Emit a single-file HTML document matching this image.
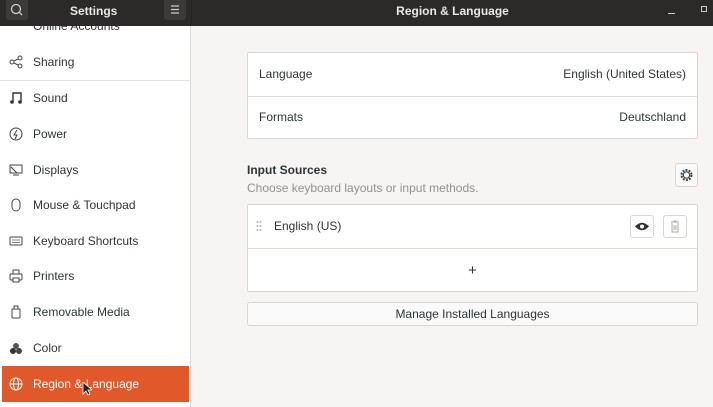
<!DOCTYPE html>
<html><head><meta charset="utf-8"><style>
*{margin:0;padding:0;box-sizing:border-box}
body{width:713px;height:407px;overflow:hidden;background:#f6f5f4;font-family:"Liberation Sans","DejaVu Sans",sans-serif;font-size:12px;color:#2e3436;position:relative}
.hdr{position:absolute;left:0;top:0;width:713px;height:26px;background:#2c2a29;color:#eee}
.hb{position:absolute;top:0;height:20px;width:22px;background:#3c3a39;border-radius:0 0 3px 3px}
.side{position:absolute;left:0;top:26px;width:191px;height:381px;background:#fff;border-right:1px solid #dcdad7;overflow:hidden}
.it{position:absolute;left:0;width:191px;height:36px;line-height:36px;padding-left:33px;font-size:12px;color:#2e3436}
.it svg{position:absolute;left:9px;top:11px}
.sel{background:#e1582a;color:#fff;left:2px;width:187px}
.box{position:absolute;left:247px;width:451px;background:#fff;border:1px solid #dad8d5;border-radius:2px}
.row{position:absolute;left:0;width:449px;height:43px;line-height:43px;padding:0 11px}
.btn{position:absolute;background:#fafafa;border:1px solid #d8d6d3;border-radius:3px}
</style></head><body>
<div class="hdr">
 <div class="hb" style="left:6px"><svg width="22" height="20"><circle cx="10" cy="9" r="4.5" fill="none" stroke="#ccc" stroke-width="1.3"/><line x1="13.3" y1="12.3" x2="16" y2="15" stroke="#ccc" stroke-width="1.3"/></svg></div>
 <div style="position:absolute;left:70px;top:4px;font-weight:bold;font-size:12px;color:#e8e8e8">Settings</div>
 <div class="hb" style="left:164px"><svg width="22" height="20"><path d="M7 6h8M7 9.5h8M7 13h8" stroke="#ccc" stroke-width="1.2"/></svg></div>
 <div style="position:absolute;left:191px;top:0;width:1px;height:26px;background:#222"></div>
 <div style="position:absolute;left:192px;width:521px;top:4px;text-align:center;font-weight:bold;color:#e8e8e8">Region &amp; Language</div>
 <div style="position:absolute;left:668px;top:13px;width:7px;height:1px;background:#ccc"></div>
 <div style="position:absolute;left:701px;top:6px;width:6px;height:6px;border:1px solid #ccc"></div>
</div>
<div class="side">
 <div class="it" style="top:-18px">Online Accounts</div>
 <div class="it" style="top:18px"><svg width="14" height="14"><circle cx="3" cy="7" r="2" fill="none" stroke="#444"/><circle cx="11" cy="3" r="2" fill="none" stroke="#444"/><circle cx="11" cy="11" r="2" fill="none" stroke="#444"/><path d="M5 6l4-2M5 8l4 2" stroke="#444"/></svg>Sharing</div>
 <div style="position:absolute;left:0;top:54px;width:191px;height:1px;background:#e6e4e1"></div>
 <div class="it" style="top:54px"><svg width="14" height="14"><path d="M4 11V2h8v9" fill="none" stroke="#333" stroke-width="1.4"/><circle cx="3" cy="11" r="1.8" fill="#333"/><circle cx="11" cy="11" r="1.8" fill="#333"/></svg>Sound</div>
 <div class="it" style="top:90px"><svg width="14" height="14"><circle cx="7" cy="7" r="6" fill="none" stroke="#444"/><path d="M8 3L5 8h3l-2 4" fill="none" stroke="#444"/></svg>Power</div>
 <div class="it" style="top:126px"><svg width="14" height="14"><rect x="1" y="2" width="12" height="8" fill="none" stroke="#444"/><path d="M4 12h6M2 4l6 6" stroke="#444"/></svg>Displays</div>
 <div class="it" style="top:161px"><svg width="14" height="14"><rect x="3" y="1" width="8" height="12" rx="4" fill="none" stroke="#444"/></svg>Mouse &amp; Touchpad</div>
 <div class="it" style="top:197px"><svg width="14" height="14"><rect x="1" y="3" width="12" height="8" rx="1" fill="none" stroke="#444"/><path d="M3 6h8M3 8.5h8" stroke="#888"/></svg>Keyboard Shortcuts</div>
 <div class="it" style="top:232px"><svg width="14" height="14"><rect x="4" y="1" width="6" height="4" fill="none" stroke="#444"/><rect x="1" y="5" width="12" height="6" rx="1" fill="none" stroke="#444"/><rect x="4" y="9" width="6" height="4" fill="#fff" stroke="#444"/></svg>Printers</div>
 <div class="it" style="top:268px"><svg width="14" height="14"><rect x="3" y="4" width="8" height="9" rx="1" fill="none" stroke="#444"/><rect x="5" y="1" width="4" height="3" fill="none" stroke="#444"/></svg>Removable Media</div>
 <div class="it" style="top:304px"><svg width="14" height="14"><circle cx="7" cy="5" r="3" fill="#555"/><circle cx="4" cy="10" r="3" fill="#333"/><circle cx="10" cy="10" r="3" fill="#444"/></svg>Color</div>
 <div class="it sel" style="top:340px;height:36px"><svg width="14" height="14" style="left:7px"><circle cx="7" cy="7" r="6" fill="none" stroke="#fff"/><ellipse cx="7" cy="7" rx="2.5" ry="6" fill="none" stroke="#fff"/><path d="M1 7h12" stroke="#fff"/></svg><span style="margin-left:-2px">Region &amp; Language</span>
 <svg width="10" height="14" style="left:80px;top:16px"><path d="M1 0v12l3-3 2 4 2-1-2-4h4z" fill="#222" stroke="#fff" stroke-width=".8"/></svg></div>
</div>
<div class="box" style="top:52px;height:87px">
 <div class="row" style="top:0">Language<span style="float:right">English (United States)</span></div>
 <div style="position:absolute;top:43px;left:0;width:449px;height:1px;background:#e3e1de"></div>
 <div class="row" style="top:43px">Formats<span style="float:right">Deutschland</span></div>
</div>
<div style="position:absolute;left:247px;top:163px;font-weight:bold">Input Sources</div>
<div style="position:absolute;left:247px;top:181px;color:#8e9192">Choose keyboard layouts or input methods.</div>
<div class="btn" style="left:675px;top:163px;width:23px;height:24px"><svg width="21" height="22"><circle cx="10.5" cy="11" r="5" fill="none" stroke="#444" stroke-width="2" stroke-dasharray="2 1.2"/><circle cx="10.5" cy="11" r="3.2" fill="none" stroke="#444" stroke-width="1.2"/></svg></div>
<div class="box" style="top:204px;height:88px">
 <div style="position:absolute;left:8px;top:15px;width:6px;height:12px;background:radial-gradient(circle,#bbb 0.8px,transparent 1.2px) 0 0/3px 4px"></div>
 <div class="row" style="top:0;padding-left:26px">English (US)</div>
 <div class="btn" style="left:382px;top:10px;width:24px;height:23px;background:#fff"><svg width="22" height="21"><path d="M4 10.5Q11 3 18 10.5Q11 18 4 10.5z" fill="#333"/><circle cx="11" cy="10.5" r="2" fill="#fff"/></svg></div>
 <div class="btn" style="left:415px;top:10px;width:24px;height:23px;background:#fff"><svg width="22" height="21"><path d="M7 6h8M9.5 5h3M8 7v9h6V7" fill="none" stroke="#aaa"/><path d="M10 9v5M12 9v5" stroke="#aaa"/></svg></div>
 <div style="position:absolute;top:43px;left:0;width:449px;height:1px;background:#e3e1de"></div>
 <div style="position:absolute;top:44px;left:0;width:449px;height:43px;line-height:43px;text-align:center;font-size:15px">+</div>
</div>
<div class="btn" style="left:247px;top:302px;width:451px;height:24px;line-height:22px;text-align:center">Manage Installed Languages</div>
</body></html>
